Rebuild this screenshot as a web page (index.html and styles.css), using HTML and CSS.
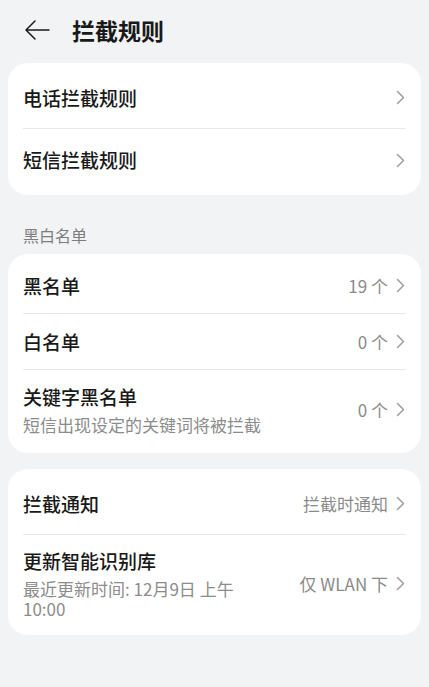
FILE: index.html
```html
<!DOCTYPE html>
<html lang="zh-CN">
<head>
    <meta charset="UTF-8">
    <meta name="viewport" content="width=device-width, initial-scale=1.0">
    <title>拦截规则</title>
    <link rel="stylesheet" href="styles.css">
</head>
<body>
    <div class="page">
        <header class="top-bar">
            <svg class="back-icon" width="26" height="22" viewBox="0 0 26 22">
                <path d="M2 11 H25 M11 2 L2 11 L11 20" fill="none" stroke="#1a1a1a" stroke-width="1.5" stroke-linecap="round" stroke-linejoin="round"/>
            </svg>
            <h1 class="page-title">拦截规则</h1>
        </header>

        <div class="card card-tall">
            <div class="row">
                <span class="row-title">电话拦截规则</span>
                <span class="row-right"><svg class="chevron" width="9" height="15" viewBox="0 0 9 15"><path d="M1.5 1.5 L7.5 7.5 L1.5 13.5" fill="none" stroke="#9e9e9e" stroke-width="1.5" stroke-linecap="round" stroke-linejoin="round"/></svg></span>
            </div>
            <div class="row">
                <span class="row-title">短信拦截规则</span>
                <span class="row-right"><svg class="chevron" width="9" height="15" viewBox="0 0 9 15"><path d="M1.5 1.5 L7.5 7.5 L1.5 13.5" fill="none" stroke="#9e9e9e" stroke-width="1.5" stroke-linecap="round" stroke-linejoin="round"/></svg></span>
            </div>
        </div>

        <div class="section-label">黑白名单</div>

        <div class="card">
            <div class="row">
                <span class="row-title">黑名单</span>
                <span class="row-right">19 个<svg class="chevron" width="9" height="15" viewBox="0 0 9 15"><path d="M1.5 1.5 L7.5 7.5 L1.5 13.5" fill="none" stroke="#9e9e9e" stroke-width="1.5" stroke-linecap="round" stroke-linejoin="round"/></svg></span>
            </div>
            <div class="row">
                <span class="row-title">白名单</span>
                <span class="row-right">0 个<svg class="chevron" width="9" height="15" viewBox="0 0 9 15"><path d="M1.5 1.5 L7.5 7.5 L1.5 13.5" fill="none" stroke="#9e9e9e" stroke-width="1.5" stroke-linecap="round" stroke-linejoin="round"/></svg></span>
            </div>
            <div class="row row-double">
                <div class="row-text">
                    <span class="row-title">关键字黑名单</span>
                    <span class="row-sub">短信出现设定的关键词将被拦截</span>
                </div>
                <span class="row-right">0 个<svg class="chevron" width="9" height="15" viewBox="0 0 9 15"><path d="M1.5 1.5 L7.5 7.5 L1.5 13.5" fill="none" stroke="#9e9e9e" stroke-width="1.5" stroke-linecap="round" stroke-linejoin="round"/></svg></span>
            </div>
        </div>

        <div class="card card-tall card-gap">
            <div class="row">
                <span class="row-title">拦截通知</span>
                <span class="row-right">拦截时通知<svg class="chevron" width="9" height="15" viewBox="0 0 9 15"><path d="M1.5 1.5 L7.5 7.5 L1.5 13.5" fill="none" stroke="#9e9e9e" stroke-width="1.5" stroke-linecap="round" stroke-linejoin="round"/></svg></span>
            </div>
            <div class="row row-triple">
                <div class="row-text">
                    <span class="row-title">更新智能识别库</span>
                    <span class="row-sub">最近更新时间: 12月9日 上午 10:00</span>
                </div>
                <span class="row-right">仅 WLAN 下<svg class="chevron" width="9" height="15" viewBox="0 0 9 15"><path d="M1.5 1.5 L7.5 7.5 L1.5 13.5" fill="none" stroke="#9e9e9e" stroke-width="1.5" stroke-linecap="round" stroke-linejoin="round"/></svg></span>
            </div>
        </div>
    </div>
</body>
</html>
```

FILE: styles.css
```css
* {
    margin: 0;
    padding: 0;
    box-sizing: border-box;
}

body {
    font-family: "Noto Sans CJK SC", "Noto Sans", sans-serif;
    background: #f1f3f5;
    color: #191919;
}

.page {
    padding: 0 8px;
}

.top-bar {
    height: 63px;
    display: flex;
    align-items: center;
    padding-left: 16px;
    padding-bottom: 3px;
}

.back-icon {
    margin-right: 22px;
}

.page-title {
    font-size: 23px;
    font-weight: 700;
    line-height: 30px;
}

.card {
    background: #fff;
    border-radius: 20px;
    padding: 4px 15px;
}

.card-gap {
    margin-top: 16px;
}

.row {
    display: flex;
    align-items: center;
    justify-content: space-between;
    min-height: 56px;
    border-bottom: 1px solid #e8e8e8;
}

.row:last-child {
    border-bottom: none;
}

.card-tall .row {
    min-height: 62px;
}

.row-double {
    min-height: 79px;
}

.card-tall .row-triple {
    min-height: 96px;
}

.row-text {
    display: flex;
    flex-direction: column;
    flex: 1;
    min-width: 0;
    margin-right: 24px;
}

.row-triple .row-text {
    margin-right: 40px;
}

.row-title {
    font-size: 19px;
    font-weight: 500;
    line-height: 26px;
}

.row-sub {
    font-size: 17px;
    color: #8c8c8c;
    line-height: 20px;
    margin-top: 5px;
}

.row-right {
    display: flex;
    align-items: center;
    font-size: 17px;
    color: #8a8a8a;
    white-space: nowrap;
}

.chevron {
    margin-left: 8px;
    margin-right: 1px;
}

.section-label {
    font-size: 16px;
    color: #7d7d7d;
    line-height: 20px;
    padding: 30px 0 9px 15px;
}
```
